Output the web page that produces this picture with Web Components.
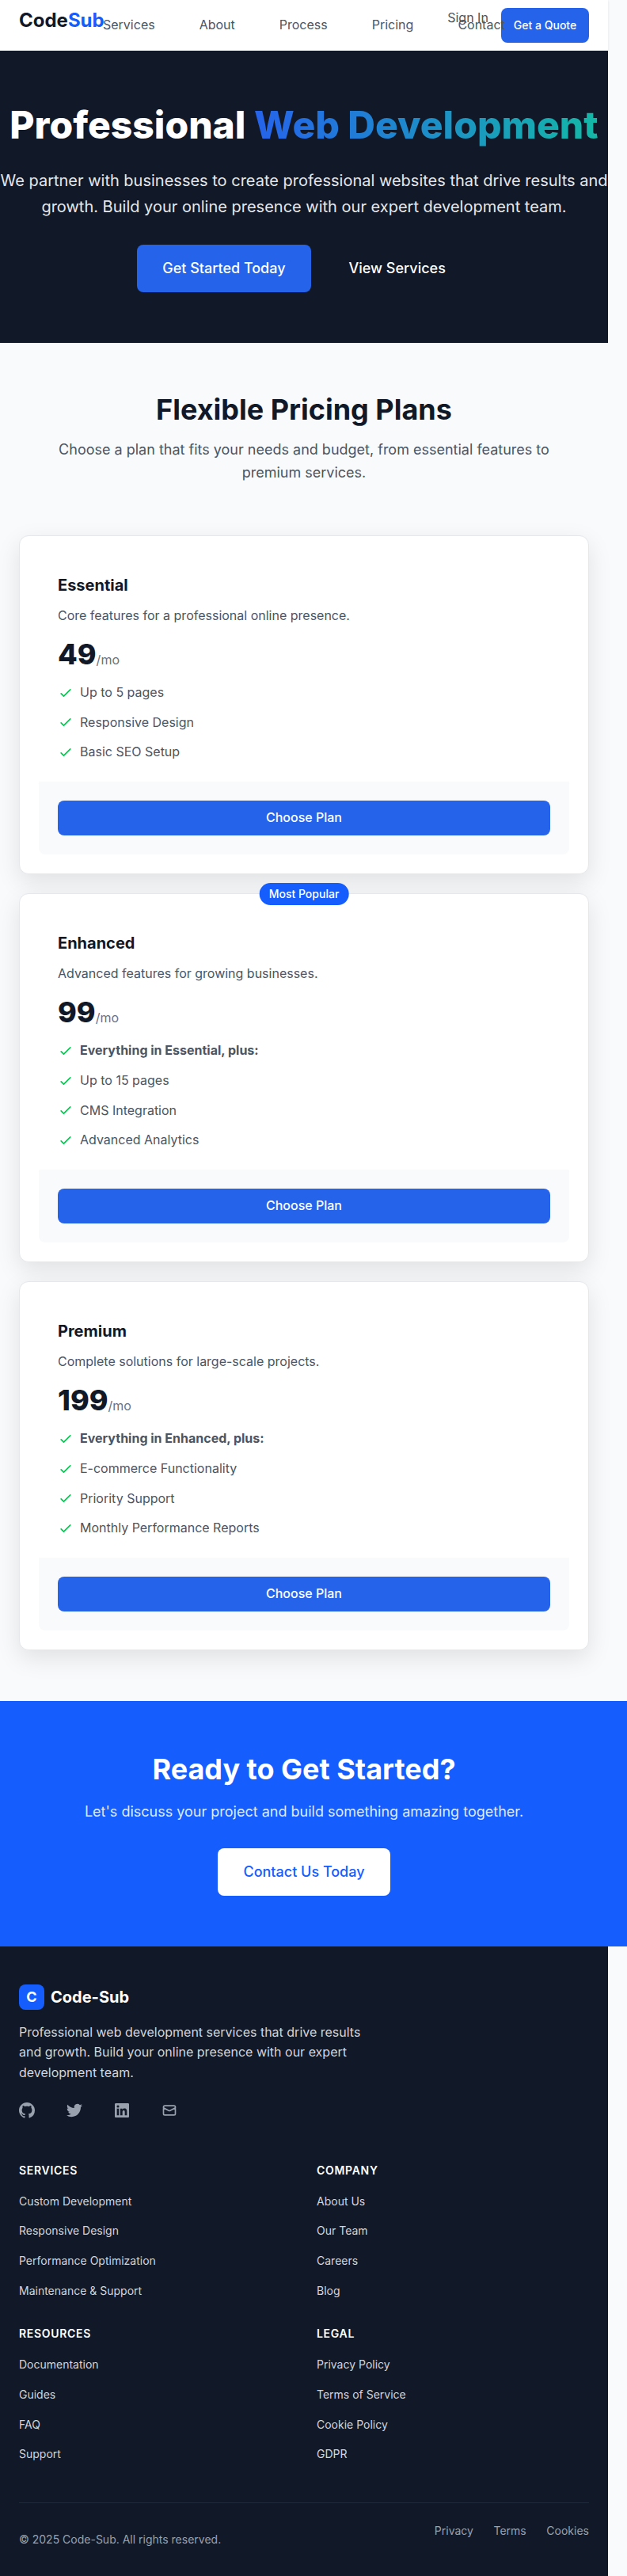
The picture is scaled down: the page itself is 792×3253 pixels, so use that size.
<!DOCTYPE html>
<html lang="en">
<head>
<meta charset="utf-8">
<title>CodeSub</title>
<style>
html{background:#f9fafc}
body{margin:0;width:792px;font-family:Inter,"Liberation Sans",sans-serif;font-size:16px;line-height:25.6px;color:#111827;background:#f9fafc}
site-header,hero-banner,pricing-section,site-footer{width:768px}
</style>
</head>
<body>
<site-header></site-header>
<hero-banner></hero-banner>
<pricing-section>
  <plan-card name="Essential" price="49">Core features for a professional online presence.
    <plan-feature slot="features">Up to 5 pages</plan-feature>
    <plan-feature slot="features">Responsive Design</plan-feature>
    <plan-feature slot="features">Basic SEO Setup</plan-feature>
  </plan-card>
  <plan-card name="Enhanced" price="99" badge="Most Popular">Advanced features for growing businesses.
    <plan-feature slot="features"><strong>Everything in Essential, plus:</strong></plan-feature>
    <plan-feature slot="features">Up to 15 pages</plan-feature>
    <plan-feature slot="features">CMS Integration</plan-feature>
    <plan-feature slot="features">Advanced Analytics</plan-feature>
  </plan-card>
  <plan-card name="Premium" price="199">Complete solutions for large-scale projects.
    <plan-feature slot="features"><strong>Everything in Enhanced, plus:</strong></plan-feature>
    <plan-feature slot="features">E-commerce Functionality</plan-feature>
    <plan-feature slot="features">Priority Support</plan-feature>
    <plan-feature slot="features">Monthly Performance Reports</plan-feature>
  </plan-card>
</pricing-section>
<cta-banner></cta-banner>
<site-footer></site-footer>
<script>
const define = (name, html) => customElements.define(name, class extends HTMLElement {
  constructor() {
    super();
    const t = document.createElement('template');
    t.innerHTML = typeof html === 'function' ? html(this) : html;
    this.attachShadow({mode: 'open'}).append(t.content.cloneNode(true));
  }
});

define('ui-button', `<style>
:host{display:inline-flex;box-sizing:border-box;align-items:center;justify-content:center;height:44px;padding:0 16px;border-radius:8px;background:#2563eb;color:#fff;font-weight:500;white-space:nowrap}
:host([size=lg]){height:60px;padding:0 32px;font-size:18px}
:host([size=sm]){font-size:14px}
:host([block]){display:flex}
:host([variant=ghost]){background:none}
:host([variant=light]){background:#fff;color:#155dfc}
</style><slot></slot>`);

define('site-header', `<style>
:host{display:flex;box-sizing:border-box;height:64px;padding:0 24px;background:#fff;box-shadow:0 1px 3px rgba(0,0,0,.1)}
.logo{margin-top:6.6px;font-size:24px;line-height:38.4px;font-weight:700;width:106px}
.logo span{color:#155dfc}
nav{position:relative;z-index:1;display:flex;gap:56px;margin-top:19px;color:#4b5563}
.actions{display:flex;gap:16px;margin:10px 0 0 -72.6px;color:#4b5563}
.actions a{white-space:nowrap}
</style>
<div class="logo">Code<span>Sub</span></div>
<nav><a>Services</a><a>About</a><a>Process</a><a>Pricing</a><a>Contact</a></nav>
<div class="actions"><a>Sign In</a><ui-button size="sm">Get a Quote</ui-button></div>`);

define('hero-banner', `<style>
:host{display:block;box-sizing:border-box;height:369px;padding-top:64px;background:#111827;color:#fff;text-align:center}
h1{margin:0 0 24px;font-size:48px;line-height:60px;font-weight:800;white-space:nowrap}
h1 span{background:linear-gradient(90deg,#2563eb,#14b8a6);-webkit-background-clip:text;background-clip:text;color:transparent}
p{margin:0 0 32px;font-size:20px;line-height:32.5px;color:#e5e7eb;white-space:nowrap}
div{display:flex;justify-content:center;gap:16px}
</style>
<h1>Professional <span>Web Development</span></h1>
<p>We partner with businesses to create professional websites that drive results and<br>growth. Build your online presence with our expert development team.</p>
<div><ui-button size="lg">Get Started Today</ui-button><ui-button size="lg" variant="ghost">View Services</ui-button></div>`);

define('pricing-section', `<style>
:host{display:block;box-sizing:border-box;height:1715px;padding:64px 24px}
h2{margin:0 0 16px;font-size:36px;line-height:40px;font-weight:700;text-align:center}
p{margin:0 auto 64px;width:640px;font-size:18px;line-height:29.25px;color:#4b5563;text-align:center}
div{display:flex;flex-direction:column;gap:24px}
</style><h2>Flexible Pricing Plans</h2>
<p>Choose a plan that fits your needs and budget, from essential features to premium services.</p>
<div><slot></slot></div>`);

define('plan-feature', `<style>
:host{display:flex;align-items:center;gap:8px;color:#4b5563}
svg{width:20px;height:20px;flex:none}
</style><svg viewBox="0 0 24 24" fill="none" stroke="#00c950" stroke-width="2" stroke-linecap="round" stroke-linejoin="round"><path d="M5 13l4 4L19 7"/></svg><span><slot></slot></span>`);

define('plan-card', el => `<style>
:host{display:block;position:relative;border:1px solid #e5e7eb;border-radius:12px;background:#fff;padding:24px;box-shadow:0 10px 30px rgba(0,0,0,.1)}
.body{padding:24px}
h3{margin:0 0 12px;font-size:20px;line-height:28px;font-weight:700}
.desc{color:#4b5563}
.price{display:flex;align-items:baseline;height:40px;margin:16px 0;color:#6b7280}
.price b{font-size:36px;line-height:40px;font-weight:800;color:#111827}
.list{display:flex;flex-direction:column;gap:12px}
.foot{padding:24px;background:#f9fafc;border-radius:0 0 8px 8px}
.badge{position:absolute;top:-14px;left:50%;transform:translateX(-50%);padding:0 12px;line-height:28px;border-radius:14px;background:#155dfc;color:#fff;font-size:14px;font-weight:500;white-space:nowrap}
</style>
${el.getAttribute('badge') ? `<div class="badge">${el.getAttribute('badge')}</div>` : ''}
<div class="body"><h3>${el.getAttribute('name')}</h3><div class="desc"><slot></slot></div>
<div class="price"><b>${el.getAttribute('price')}</b><span>/mo</span></div>
<div class="list"><slot name="features"></slot></div></div>
<div class="foot"><ui-button block>Choose Plan</ui-button></div>`);

define('cta-banner', `<style>
:host{display:block;box-sizing:border-box;width:792px;height:310.25px;padding:64px 24px 0 0;background:#155dfc;color:#fff;text-align:center}
h2{margin:0 0 16px;font-size:36px;line-height:45px;font-weight:700}
p{margin:0 0 32px;font-size:18px;line-height:29.25px;color:#dbeafe}
</style><h2>Ready to Get Started?</h2><p>Let's discuss your project and build something amazing together.</p>
<ui-button size="lg" variant="light">Contact Us Today</ui-button>`);

define('footer-links', el => `<style>
:host{display:block;font-size:14px}
h4{margin:0 0 14.8px;line-height:22.4px;font-size:14px;font-weight:600;letter-spacing:.7px;text-transform:uppercase;color:#fff}
div{display:flex;flex-direction:column;gap:12px;color:#d1d5dc}
</style><h4>${el.getAttribute('heading')}</h4><div><slot></slot></div>`);

define('site-footer', `<style>
:host{display:block;box-sizing:border-box;height:794.75px;padding:48px 24px 0;background:#111827}
.brand{display:flex;align-items:center;gap:8px;color:#fff;font-size:20px;font-weight:700}
.brand span{padding-top:1px}
.mark{width:32px;height:32px;line-height:32px;border-radius:8px;background:#155dfc;text-align:center;font-size:18px}
p{margin:15.6px 0 24px;width:448px;color:#d1d5dc}
.social{display:flex;gap:40px;color:#99a1af}
svg{display:block;width:20px;height:20px}
.cols{display:grid;grid-template-columns:1fr 1fr;gap:31px 32px;margin-top:55px}
.bottom{display:flex;align-items:flex-start;gap:25.6px;margin-top:48px;border-top:1px solid #1e2939;font-size:14px;color:#99a1af}
.bottom a{margin-top:22px}
.bottom .copy{margin:33.6px auto 0 0}
</style>
<div class="brand"><div class="mark">C</div><span>Code-Sub</span></div>
<p>Professional web development services that drive results and growth. Build your online presence with our expert development team.</p>
<div class="social">
<svg viewBox="0 0 24 24" fill="currentColor"><path fill-rule="evenodd" clip-rule="evenodd" d="M12 0C5.37 0 0 5.37 0 12c0 5.31 3.435 9.795 8.205 11.385.6.105.825-.255.825-.57 0-.285-.015-1.23-.015-2.235-3.015.555-3.795-.735-4.035-1.41-.135-.345-.72-1.41-1.23-1.695-.42-.225-1.02-.78-.015-.795.945-.015 1.62.87 1.845 1.23 1.08 1.815 2.805 1.305 3.495.99.105-.78.42-1.305.765-1.605-2.67-.3-5.46-1.335-5.46-5.925 0-1.305.465-2.385 1.23-3.225-.12-.3-.54-1.53.12-3.18 0 0 1.005-.315 3.3 1.23.96-.27 1.98-.405 3-.405s2.04.135 3 .405c2.295-1.56 3.3-1.23 3.3-1.23.66 1.65.24 2.88.12 3.18.765.84 1.23 1.905 1.23 3.225 0 4.605-2.805 5.625-5.475 5.925.435.375.81 1.095.81 2.22 0 1.605-.015 2.895-.015 3.3 0 .315.225.69.825.57A12.02 12.02 0 0 0 24 12c0-6.63-5.37-12-12-12z"/></svg>
<svg viewBox="0 0 24 24" fill="currentColor"><path d="M23.953 4.57a10 10 0 01-2.825.775 4.958 4.958 0 002.163-2.723c-.951.555-2.005.959-3.127 1.184a4.92 4.92 0 00-8.384 4.482C7.69 8.095 4.067 6.13 1.64 3.162a4.822 4.822 0 00-.666 2.475c0 1.71.87 3.213 2.188 4.096a4.904 4.904 0 01-2.228-.616v.06a4.923 4.923 0 003.946 4.827 4.996 4.996 0 01-2.212.085 4.936 4.936 0 004.604 3.417 9.867 9.867 0 01-6.102 2.105c-.39 0-.779-.023-1.17-.067a13.995 13.995 0 007.557 2.209c9.053 0 13.998-7.496 13.998-13.985 0-.21 0-.42-.015-.63A9.935 9.935 0 0024 4.59z"/></svg>
<svg viewBox="0 0 20 20" fill="currentColor"><path fill-rule="evenodd" clip-rule="evenodd" d="M16.338 16.338H13.67V12.16c0-.995-.017-2.277-1.387-2.277-1.39 0-1.601 1.086-1.601 2.207v4.248H8.014v-8.59h2.559v1.174h.037c.356-.675 1.227-1.387 2.526-1.387 2.703 0 3.203 1.778 3.203 4.092v4.711zM5.005 6.575a1.548 1.548 0 11-.003-3.096 1.548 1.548 0 01.003 3.096zm-1.337 9.763H6.34v-8.59H3.667v8.59zM17.668 1H2.328C1.595 1 1 1.581 1 2.298v15.403C1 18.418 1.595 19 2.328 19h15.34c.734 0 1.332-.582 1.332-1.299V2.298C19 1.581 18.402 1 17.668 1z"/></svg>
<svg viewBox="0 0 24 24" fill="none" stroke="currentColor" stroke-width="2" stroke-linecap="round" stroke-linejoin="round"><path d="M3 8l7.89 4.26a2 2 0 002.22 0L21 8M5 19h14a2 2 0 002-2V7a2 2 0 00-2-2H5a2 2 0 00-2 2v10a2 2 0 002 2z"/></svg>
</div>
<div class="cols">
<footer-links heading="Services"><a>Custom Development</a><a>Responsive Design</a><a>Performance Optimization</a><a>Maintenance &amp; Support</a></footer-links>
<footer-links heading="Company"><a>About Us</a><a>Our Team</a><a>Careers</a><a>Blog</a></footer-links>
<footer-links heading="Resources"><a>Documentation</a><a>Guides</a><a>FAQ</a><a>Support</a></footer-links>
<footer-links heading="Legal"><a>Privacy Policy</a><a>Terms of Service</a><a>Cookie Policy</a><a>GDPR</a></footer-links>
</div>
<div class="bottom"><span class="copy">© 2025 Code-Sub. All rights reserved.</span><a>Privacy</a><a>Terms</a><a>Cookies</a></div>`);
</script>
</body>
</html>
